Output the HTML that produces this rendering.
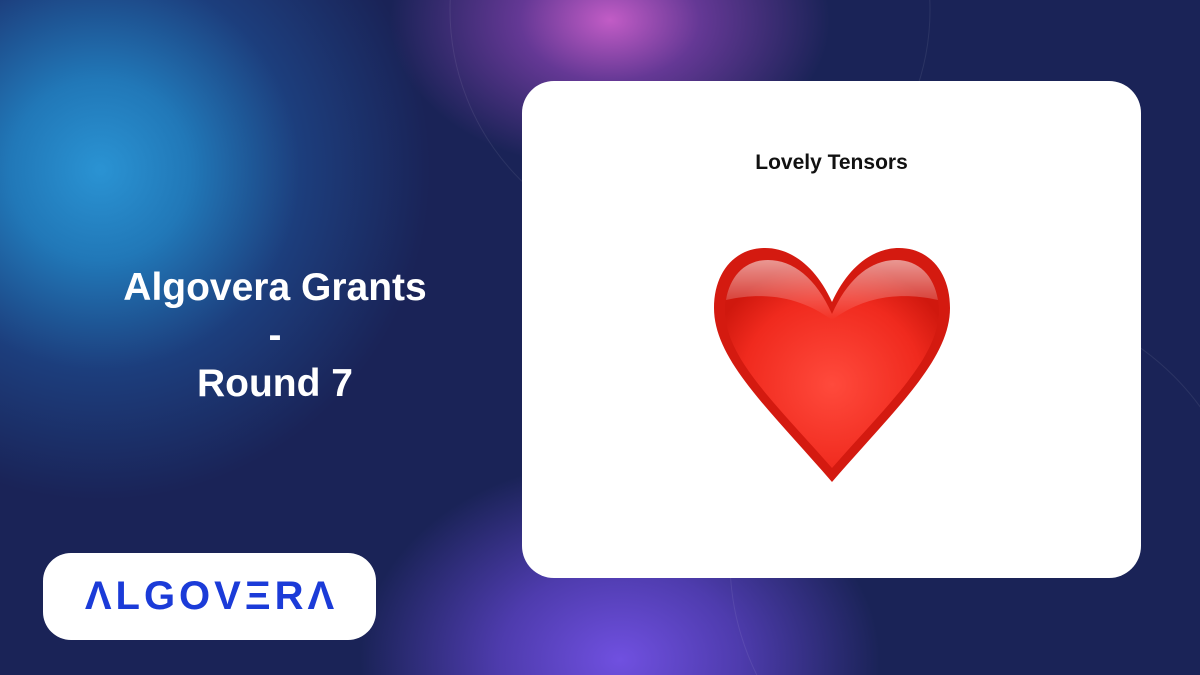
<!DOCTYPE html>
<html><head><meta charset="utf-8"><style>
*{margin:0;padding:0;box-sizing:border-box}
html,body{width:1200px;height:675px;overflow:hidden;background:#1a2357}
#w{position:relative;width:1200px;height:675px;overflow:hidden;font-family:"Liberation Sans",sans-serif;
background:
radial-gradient(circle at 100px 170px,#2a93d3 0,#2178b8 90px,rgba(30,80,150,.6) 200px,rgba(26,35,85,0) 330px),
radial-gradient(ellipse 220px 150px at 610px 20px,#c25cc6 0,rgba(150,70,190,.6) 90px,rgba(26,35,85,0) 220px),
radial-gradient(ellipse 260px 200px at 620px 660px,#7050e0 0,rgba(100,70,210,.7) 120px,rgba(26,35,85,0) 260px),
#1a2357;background-repeat:no-repeat}
.title{position:absolute;left:75px;width:400px;top:264px;text-align:center;color:#fff;font-size:39px;font-weight:bold;line-height:48px}
.card{position:absolute;left:522px;top:81px;width:619px;height:497px;background:#fff;border-radius:32px}
.card h2{position:absolute;top:70px;width:100%;text-align:center;font-size:21px;font-weight:bold;color:#111}
.logo{position:absolute;left:43px;top:553px;width:333px;height:87px;background:#fff;border-radius:28px;color:#1b3bd8;font-size:40px;font-weight:bold;letter-spacing:4px;line-height:87px;text-align:center;padding-left:4px}
svg{position:absolute;left:0;top:0}
</style></head><body><div id="w">
<svg width="1200" height="675">
<circle cx="690" cy="10" r="240" fill="none" stroke="rgba(255,255,255,.08)"/>
<circle cx="990" cy="560" r="260" fill="none" stroke="rgba(255,255,255,.08)"/>
</svg>
<div class="title">Algovera Grants<br>-<br>Round 7</div>
<div class="card"><h2>Lovely Tensors</h2></div>
<svg width="1200" height="675">
<defs>
<radialGradient id="g" cx="0.5" cy="0.6" r="0.6"><stop offset="0" stop-color="#ff4a3c"/><stop offset="0.7" stop-color="#f02a1e"/><stop offset="1" stop-color="#d0180e"/></radialGradient>
<linearGradient id="h" x1="0" y1="0" x2="0" y2="1"><stop offset="0" stop-color="#fff" stop-opacity=".55"/><stop offset="1" stop-color="#fff" stop-opacity="0"/></linearGradient>
</defs>
<path d="M832 302 C815 265 790 248 765 248 C735 248 714 272 714 308 C714 360 770 410 832 482 C894 410 950 360 950 308 C950 272 929 248 899 248 C874 248 849 265 832 302Z" fill="#d41a10"/>
<path d="M832 314 C816 278 793 260 768 260 C742 260 725 282 725 310 C725 358 776 404 832 468 C888 404 939 358 939 310 C939 282 922 260 896 260 C871 260 848 278 832 314Z" fill="url(#g)"/>
<path d="M832 314 C816 278 793 260 768 260 C745 260 730 276 726 300 C770 290 805 300 832 320 C859 300 894 290 938 300 C934 276 919 260 896 260 C871 260 848 278 832 314Z" fill="url(#h)"/>
</svg>
<div class="logo">ΛLGOVΞRΛ</div>
</div></body></html>
